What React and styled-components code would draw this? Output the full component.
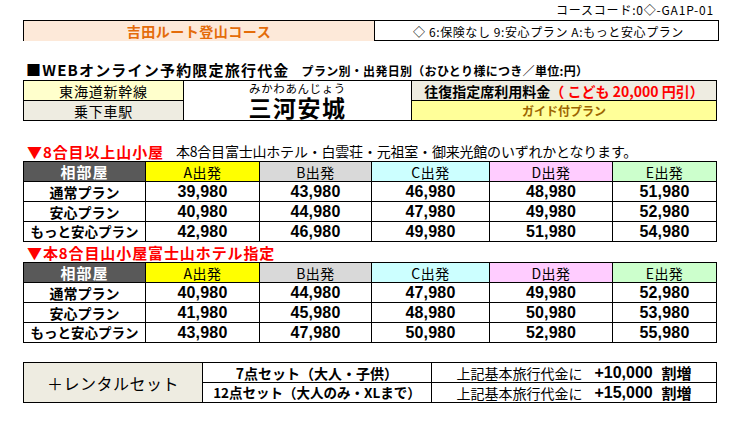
import React from "react";
import styled, { createGlobalStyle } from "styled-components";

const GlobalStyle = createGlobalStyle`
  html, body { margin: 0; padding: 0; background: #fff; }
  body {
    font-family: "Noto Sans CJK JP", "Liberation Sans", sans-serif;
    color: #000;
  }
  * { box-sizing: border-box; }
`;

const Page = styled.div`
  width: 740px;
  height: 421px;
  padding: 0 22px 0 23px;
  overflow: hidden;
`;

const CodeLine = styled.div`
  height: 20px;
  line-height: 20px;
  text-align: right;
  font-size: 12px;
  padding-right: 4px;
  letter-spacing: 0.8px;
`;

const TopRow = styled.div`
  display: grid;
  grid-template-columns: 351px 343px;
  height: 21px;
  border: 1px solid #000;
  width: 696px;
`;

const TitleCell = styled.div`
  background: #fde9d9;
  color: #e46c0a;
  font-weight: 700;
  font-size: 14px;
  letter-spacing: 0.5px;
  display: flex;
  align-items: center;
  justify-content: center;
  border-right: 1px solid #000;
`;

const NoteCell = styled.div`
  font-size: 12px;
  display: flex;
  align-items: center;
  justify-content: center;
  padding-left: 4px;
  white-space: pre;
  letter-spacing: 0.6px;
`;

const Heading = styled.div`
  margin-top: 19px;
  height: 20px;
  display: flex;
  align-items: flex-end;
  padding-left: 3px;
  padding-bottom: 1px;
  white-space: nowrap;
`;

const HeadingMain = styled.span`
  font-size: 15px;
  font-weight: 700;
  letter-spacing: 1.2px;
  line-height: 18px;
`;

const HeadingSub = styled.span`
  font-size: 12px;
  font-weight: 700;
  margin-left: 12px;
  line-height: 16px;
  letter-spacing: 0.3px;
`;

const Grid = styled.div`
  display: grid;
  grid-template-columns: ${(p) => p.$cols};
  grid-auto-rows: 20px;
  border-top: 1px solid #000;
  border-left: 1px solid #000;
  width: ${(p) => p.$width || "694px"};
`;

const Cell = styled.div`
  border-right: 1px solid #000;
  border-bottom: 1px solid #000;
  background: ${(p) => p.$bg || "#fff"};
  color: ${(p) => p.$color || "#000"};
  font-size: ${(p) => p.$size || "14px"};
  font-weight: ${(p) => (p.$bold ? 700 : 400)};
  letter-spacing: ${(p) => p.$ls || "0"};
  grid-row: ${(p) => (p.$rows ? `span ${p.$rows}` : "auto")};
  display: flex;
  flex-direction: ${(p) => (p.$column ? "column" : "row")};
  align-items: center;
  justify-content: center;
  white-space: nowrap;
  line-height: 1;
`;

const Kana = styled.span`
  font-size: 11.5px;
  line-height: 13px;
  letter-spacing: 0.6px;
`;

const Station = styled.span`
  font-size: 23px;
  font-weight: 700;
  line-height: 24px;
  letter-spacing: 1.5px;
`;

const Red = styled.span`
  color: #ff0000;
  white-space: pre;
`;

const SectionTitle = styled.div`
  margin-top: ${(p) => p.$top || "0px"};
  height: ${(p) => p.$h || "20px"};
  display: flex;
  align-items: center;
  padding-left: 4px;
  white-space: nowrap;
`;

const SectionRed = styled.span`
  color: #ff0000;
  font-weight: 700;
  font-size: 15px;
  letter-spacing: 0.9px;
`;

const SectionNote = styled.span`
  font-size: 14px;
  margin-left: 12px;
  letter-spacing: -0.2px;
`;

const Num = styled(Cell)`
  font-family: "Liberation Sans", "Noto Sans CJK JP", sans-serif;
  font-size: 16px;
  font-weight: 700;
  letter-spacing: 0.2px;
`;

const Rental = styled(Grid)`
  margin-top: 19px;
`;

const RentalPrice = styled.span`
  font-family: "Liberation Sans", "Noto Sans CJK JP", sans-serif;
  font-weight: 700;
  font-size: 16px;
  margin-left: 12px;
  white-space: pre;
`;

const Surcharge = styled.span`
  font-weight: 700;
  font-size: 15px;
`;

const COLS = [
  { k: "A", bg: "#ffff00" },
  { k: "B", bg: "#d9d9d9" },
  { k: "C", bg: "#ccffff" },
  { k: "D", bg: "#ffccff" },
  { k: "E", bg: "#ccffcc" },
];

const PLANS = ["通常プラン", "安心プラン", "もっと安心プラン"];

const TABLE1 = [
  ["39,980", "43,980", "46,980", "48,980", "51,980"],
  ["40,980", "44,980", "47,980", "49,980", "52,980"],
  ["42,980", "46,980", "49,980", "51,980", "54,980"],
];

const TABLE2 = [
  ["40,980", "44,980", "47,980", "49,980", "52,980"],
  ["41,980", "45,980", "48,980", "50,980", "53,980"],
  ["43,980", "47,980", "50,980", "52,980", "55,980"],
];

const PRICE_COLS = "122px 114px 112px 118px 123px 104px";

function PriceTable({ data }) {
  return (
    <Grid $cols={PRICE_COLS}>
      <Cell $bg="#595959" $color="#fff" $bold $size="15px" $ls="1px">
        相部屋
      </Cell>
      {COLS.map((c) => (
        <Cell key={c.k} $bg={c.bg} $size="14px" $ls="0.5px">
          {c.k}出発
        </Cell>
      ))}
      {data.map((row, i) => (
        <React.Fragment key={i}>
          <Cell $bold $size={i === 2 ? "13.5px" : "14px"}>
            {PLANS[i]}
          </Cell>
          {row.map((v, j) => (
            <Num key={j}>{v}</Num>
          ))}
        </React.Fragment>
      ))}
    </Grid>
  );
}

export default function App() {
  return (
    <>
      <GlobalStyle />
      <Page>
        <CodeLine>コースコード:0◇-GA1P-01</CodeLine>
        <TopRow>
          <TitleCell>吉田ルート登山コース</TitleCell>
          <NoteCell>◇ 6:保険なし 9:安心プラン A:もっと安心プラン</NoteCell>
        </TopRow>

        <Heading>
          <HeadingMain>■WEBオンライン予約限定旅行代金</HeadingMain>
          <HeadingSub>プラン別・出発日別（おひとり様につき／単位:円）</HeadingSub>
        </Heading>

        <Grid $cols="160px 228px 305px">
          <Cell $bg="#ffffcc" $size="14px" $ls="0.8px">
            東海道新幹線
          </Cell>
          <Cell $rows={2} $column>
            <Kana>みかわあんじょう</Kana>
            <Station>三河安城</Station>
          </Cell>
          <Cell $bg="#eeece1" $bold $size="14px">
            往復指定席利用料金<Red>（ こども 20,000 円引）</Red>
          </Cell>
          <Cell $bg="#eeece1" $size="14px" $ls="0.8px">
            乗下車駅
          </Cell>
          <Cell $bg="#ffff99" $color="#9c6500" $bold $size="12px">
            ガイド付プラン
          </Cell>
        </Grid>

        <SectionTitle $top="20px">
          <SectionRed>▼8合目以上山小屋</SectionRed>
          <SectionNote>本8合目富士山ホテル・白雲荘・元祖室・御来光館のいずれかとなります。</SectionNote>
        </SectionTitle>
        <PriceTable data={TABLE1} />

        <SectionTitle $h="20px">
          <SectionRed>▼本8合目山小屋富士山ホテル指定</SectionRed>
        </SectionTitle>
        <PriceTable data={TABLE2} />

        <Rental $cols="179px 229px 285px">
          <Cell $rows={2} $bg="#eeece1" $size="16px" $ls="0.5px">
            ＋レンタルセット
          </Cell>
          <Cell $bold $size="14px">
            7点セット（大人・子供）
          </Cell>
          <Cell $size="14px">
            上記基本旅行代金に<RentalPrice>+10,000  </RentalPrice>
            <Surcharge>割増</Surcharge>
          </Cell>
          <Cell $bold $size="13.5px">
            12点セット（大人のみ・XLまで）
          </Cell>
          <Cell $size="14px">
            上記基本旅行代金に<RentalPrice>+15,000  </RentalPrice>
            <Surcharge>割増</Surcharge>
          </Cell>
        </Rental>
      </Page>
    </>
  );
}
